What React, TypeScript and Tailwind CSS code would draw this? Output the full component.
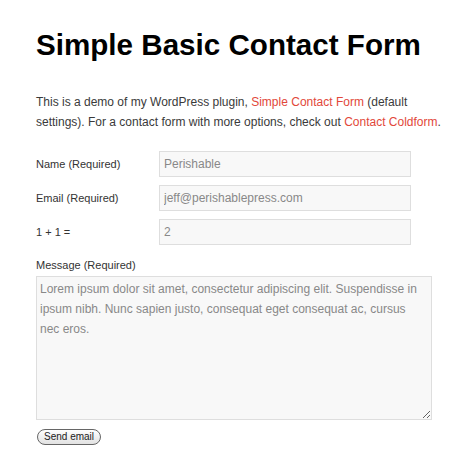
import React from 'react';

const fieldLabel = 'w-[123px] shrink-0 text-[11px] leading-[16px] text-[#333]';
const fieldInput =
    'h-[26px] w-[252px] border border-[#dedede] bg-[#f8f8f8] px-[4px] text-[12px] text-[#888] outline-none';

const App: React.FC = () => {
    const rows = [
        { label: 'Name (Required)', value: 'Perishable' },
        { label: 'Email (Required)', value: 'jeff@perishablepress.com' },
        { label: '1 + 1 =', value: '2' },
    ];

    return (
        <div className="min-h-[469px] bg-white px-[36px] pt-[27px] font-['Liberation_Sans',Arial,sans-serif]">
            <h1 className="whitespace-nowrap text-[29.6px] font-bold leading-[36px] text-black">Simple Basic Contact Form</h1>

            <p className="mt-[29px] w-[410px] text-[12px] leading-[20px] text-[#3a3a3a]">
                This is a demo of my WordPress plugin, <a className="text-[#e2473a]">Simple Contact Form</a> (default
                settings). For a contact form with more options, check out{' '}
                <a className="text-[#e2473a]">Contact Coldform</a>.
            </p>

            {/* Fields */}
            <div className="mt-[19px] flex flex-col gap-[8px]">
                {rows.map((row) => (
                    <div key={row.label} className="flex items-center">
                        <label className={fieldLabel}>{row.label}</label>
                        <input className={fieldInput} defaultValue={row.value} readOnly />
                    </div>
                ))}
            </div>

            <div className="mt-[12px] text-[11px] leading-[16px] text-[#333]">Message (Required)</div>
            <textarea
                className="mt-[3px] block h-[144px] w-[396px] resize-y border border-[#dedede] bg-[#f8f8f8] px-[3px] py-[2px] text-[12px] leading-[20px] text-[#888] outline-none"
                defaultValue="Lorem ipsum dolor sit amet, consectetur adipiscing elit. Suspendisse in ipsum nibh. Nunc sapien justo, consequat eget consequat ac, cursus nec eros."
                readOnly
            />

            <button className="mt-[9px] ml-[1px] block h-[16px] rounded-full border border-[#666] bg-gradient-to-b from-white to-[#e2e2e2] px-[6px] text-[10px] leading-[12px] text-[#222]">
                Send email
            </button>
        </div>
    );
};

export default App;
